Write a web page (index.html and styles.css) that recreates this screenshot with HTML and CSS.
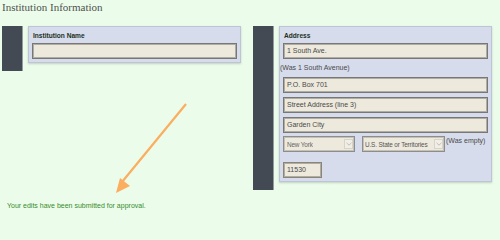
FILE: index.html
```html
<!DOCTYPE html>
<html>
<head>
<meta charset="utf-8">
<link rel="stylesheet" href="styles.css">
</head>
<body>
<h1 class="title">Institution Information</h1>
<div class="row">
  <div class="section">
    <div class="bar"></div>
    <div class="panel">
      <div class="label">Institution Name</div>
      <div class="field"></div>
    </div>
  </div>
  <div class="section">
    <div class="bar"></div>
    <div class="panel">
      <div class="label">Address</div>
      <div class="field">1 South Ave.</div>
      <div class="note">(Was 1 South Avenue)</div>
      <div class="field">P.O. Box 701</div>
      <div class="field spaced">Street Address (line 3)</div>
      <div class="field spaced">Garden City</div>
      <div class="selects">
        <div class="select s1"><span class="sel-text">New York</span><span class="sel-arrow"><svg width="6" height="4" viewBox="0 0 6 4"><path d="M0.5 0.8 L3 3.2 L5.5 0.8" fill="none" stroke="#b8b8b8" stroke-width="0.9"/></svg></span></div>
        <div class="select s2"><span class="sel-text">U.S. State or Territories</span><span class="sel-arrow"><svg width="6" height="4" viewBox="0 0 6 4"><path d="M0.5 0.8 L3 3.2 L5.5 0.8" fill="none" stroke="#b8b8b8" stroke-width="0.9"/></svg></span></div>
        <div class="was">(Was empty)</div>
      </div>
      <div class="field zip">11530</div>
    </div>
  </div>
</div>
<div class="message">Your edits have been submitted for approval.</div>
<svg class="arrow" width="500" height="216" viewBox="0 0 500 216">
  <line x1="186" y1="104" x2="122" y2="182" stroke="#fbad60" stroke-width="2.2"/>
  <polygon points="116,193 120,178 130,186" fill="#fbad60"/>
</svg>
</body>
</html>
```
FILE: styles.css
```css
html, body {
  margin: 0;
  padding: 0;
}
body {
  background: #ebfdea;
  padding: 0 2px;
  font-family: "Liberation Sans", Arial, sans-serif;
  position: relative;
  width: 496px;
  height: 216px;
  overflow: hidden;
}
.title {
  margin: 0;
  padding-top: 1px;
  font-family: "Liberation Serif", "Times New Roman", serif;
  font-weight: normal;
  font-size: 11px;
  line-height: 13px;
  color: #505050;
}
.row {
  display: flex;
  align-items: flex-start;
  gap: 12px;
  margin-top: 12px;
}
.section {
  display: flex;
  align-items: stretch;
  width: 239px;
}
.bar {
  width: 20px;
  background: #434a53;
  border-right: 1px solid #959b9e;
  flex: none;
}
.panel {
  box-sizing: border-box;
  width: 213px;
  margin-left: 5px;
  margin-bottom: 8px;
  background: #d6dcec;
  border: 1px solid #bcc4d6;
  box-shadow: 0 1px 2px rgba(0, 0, 0, 0.18);
  padding: 4px 3px 3px 3px;
}
.label {
  font-weight: bold;
  font-size: 6.6px;
  line-height: 9px;
  color: #1b301d;
  margin-bottom: 3px;
  padding-left: 1px;
}
.field {
  box-sizing: border-box;
  height: 16px;
  background: #ede9dc;
  border: 1px solid #777;
  box-shadow: inset 0 0 0 1px #b0ada2;
  font-size: 7px;
  line-height: 14px;
  padding-left: 3px;
  color: #4a4a4a;
}
.spaced {
  margin-top: 4px;
}
.note {
  font-size: 7px;
  line-height: 18px;
  color: #4a4a4a;
  margin-left: -3px;
}
.selects {
  display: flex;
  align-items: flex-start;
  margin-top: 3px;
}
.select {
  box-sizing: border-box;
  height: 16px;
  display: flex;
  align-items: center;
  justify-content: space-between;
  background: #ede9dc;
  border: 1px solid #8d8d8d;
  box-shadow: inset 0 0 0 1px #c4c1b6;
  font-size: 6.4px;
  letter-spacing: -0.15px;
  padding: 0 1px 0 2px;
  color: #666;
}
.s1 {
  width: 72px;
  padding-left: 3px;
}
.s2 {
  width: 83px;
  margin-left: 7px;
  color: #555;
}
.sel-text {
  white-space: nowrap;
  overflow: hidden;
}
.sel-arrow {
  box-sizing: border-box;
  width: 9px;
  height: 10px;
  border: 1px solid #d6d3ca;
  background: #f1eee5;
  display: flex;
  align-items: center;
  justify-content: center;
  flex: none;
}
.was {
  font-size: 7px;
  line-height: 9px;
  color: #4a4a4a;
  margin-left: 1px;
  white-space: nowrap;
}
.zip {
  width: 39px;
  margin-top: 10px;
  border-color: #8a8577;
}
.message {
  margin-top: 11px;
  padding-left: 5px;
  font-size: 7px;
  line-height: 10px;
  color: #3a8a2e;
}
.arrow {
  position: absolute;
  left: 0;
  top: 0;
  pointer-events: none;
}
```
